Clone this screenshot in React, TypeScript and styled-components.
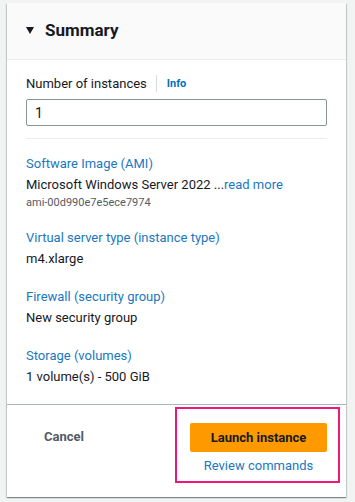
import React from 'react';
import styled, { createGlobalStyle } from 'styled-components';

const GlobalStyle = createGlobalStyle`
  html, body {
    margin: 0;
    padding: 0;
    background: #f2f3f3;
    font-family: Roboto, "Noto Sans", Arial, sans-serif;
    color: #16191f;
  }
`;

const Page = styled.div`
  padding: 3px 9px 4px 7px;
`;

const Panel = styled.section`
  background: #ffffff;
  box-shadow: 0 1px 1px 0 rgba(0, 28, 36, 0.3), 1px 1px 1px 0 rgba(0, 28, 36, 0.15),
    -1px 1px 1px 0 rgba(0, 28, 36, 0.15);
`;

const Header = styled.div`
  display: flex;
  align-items: center;
  gap: 11px;
  height: 57px;
  padding: 0 19px 3px;
  background: #fafafa;
  border-bottom: 1px solid #eaeded;
  box-sizing: border-box;
`;

const Caret = styled.span`
  width: 0;
  height: 0;
  border-left: 4.5px solid transparent;
  border-right: 4.5px solid transparent;
  border-top: 7px solid #16191f;
  margin-top: 1px;
`;

const Title = styled.h2`
  margin: 0;
  font-size: 17px;
  font-weight: 700;
  color: #16191f;
`;

const Body = styled.div`
  padding: 13px 19px 16px;
  height: 344px;
  box-sizing: border-box;
`;

const LabelRow = styled.div`
  display: flex;
  align-items: center;
  height: 20px;
  font-size: 13px;
`;

const Divider = styled.span`
  width: 1px;
  height: 17px;
  background: #d5dbdb;
  margin: 0 10px 0 9px;
`;

const InfoLink = styled.a`
  font-size: 11px;
  font-weight: 700;
  color: #0073bb;
`;

const Input = styled.div`
  margin-top: 6px;
  height: 27px;
  border: 1px solid #879596;
  border-radius: 2px;
  box-sizing: border-box;
  display: flex;
  align-items: center;
  padding: 0 8px;
  font-size: 14px;
`;

const Rule = styled.hr`
  border: none;
  border-top: 1px solid #eaeded;
  margin: 12px 0 14px;
`;

const Item = styled.div`
  margin-bottom: 17px;
`;

const ItemLabel = styled.div`
  font-size: 13px;
  color: #1a77c0;
  line-height: 22px;
`;

const ItemValue = styled.div`
  font-size: 13px;
  color: #16191f;
  line-height: 20px;
`;

const ReadMore = styled.span`
  color: #1a77c0;
`;

const ItemSub = styled.div`
  font-size: 11px;
  color: #545b64;
  line-height: 15px;
`;

const Footer = styled.div`
  display: flex;
  align-items: flex-start;
  height: 93px;
  border-top: 1px solid #aab7b8;
  box-sizing: border-box;
  padding: 2px 6px 0 0;
`;

const CancelButton = styled.button`
  width: 114px;
  background: none;
  border: none;
  font-family: inherit;
  font-size: 13px;
  font-weight: 700;
  color: #545b64;
  padding: 0;
  margin-top: 22px;
`;

const Highlight = styled.div`
  margin-left: auto;
  width: 165px;
  height: 76px;
  border: 2px solid #f0177c;
  box-sizing: border-box;
  display: flex;
  flex-direction: column;
  align-items: center;
  padding: 14px 0 0 2px;
`;

const PrimaryButton = styled.button`
  width: 137px;
  height: 29px;
  background: #ff9900;
  border: none;
  border-radius: 2px;
  font-family: inherit;
  font-size: 13px;
  font-weight: 700;
  color: #16191f;
  padding: 0;
`;

const ReviewLink = styled.a`
  margin-top: 6px;
  font-size: 13px;
  color: #1a77c0;
`;

const summaryItems = [
  { label: 'Virtual server type (instance type)', value: 'm4.xlarge' },
  { label: 'Firewall (security group)', value: 'New security group' },
  { label: 'Storage (volumes)', value: '1 volume(s) - 500 GiB' },
];

const App: React.FC = () => {
  return (
    <Page>
      <GlobalStyle />
      <Panel>
        <Header>
          <Caret />
          <Title>Summary</Title>
        </Header>
        <Body>
          <LabelRow>
            Number of instances
            <Divider />
            <InfoLink>Info</InfoLink>
          </LabelRow>
          <Input>1</Input>
          <Rule />
          <Item>
            <ItemLabel>Software Image (AMI)</ItemLabel>
            <ItemValue>
              Microsoft Windows Server 2022 ...<ReadMore>read more</ReadMore>
            </ItemValue>
            <ItemSub>ami-00d990e7e5ece7974</ItemSub>
          </Item>
          {summaryItems.map(item => (
            <Item key={item.label}>
              <ItemLabel>{item.label}</ItemLabel>
              <ItemValue>{item.value}</ItemValue>
            </Item>
          ))}
        </Body>
        <Footer>
          <CancelButton>Cancel</CancelButton>
          <Highlight>
            <PrimaryButton>Launch instance</PrimaryButton>
            <ReviewLink>Review commands</ReviewLink>
          </Highlight>
        </Footer>
      </Panel>
    </Page>
  );
};

export default App;
